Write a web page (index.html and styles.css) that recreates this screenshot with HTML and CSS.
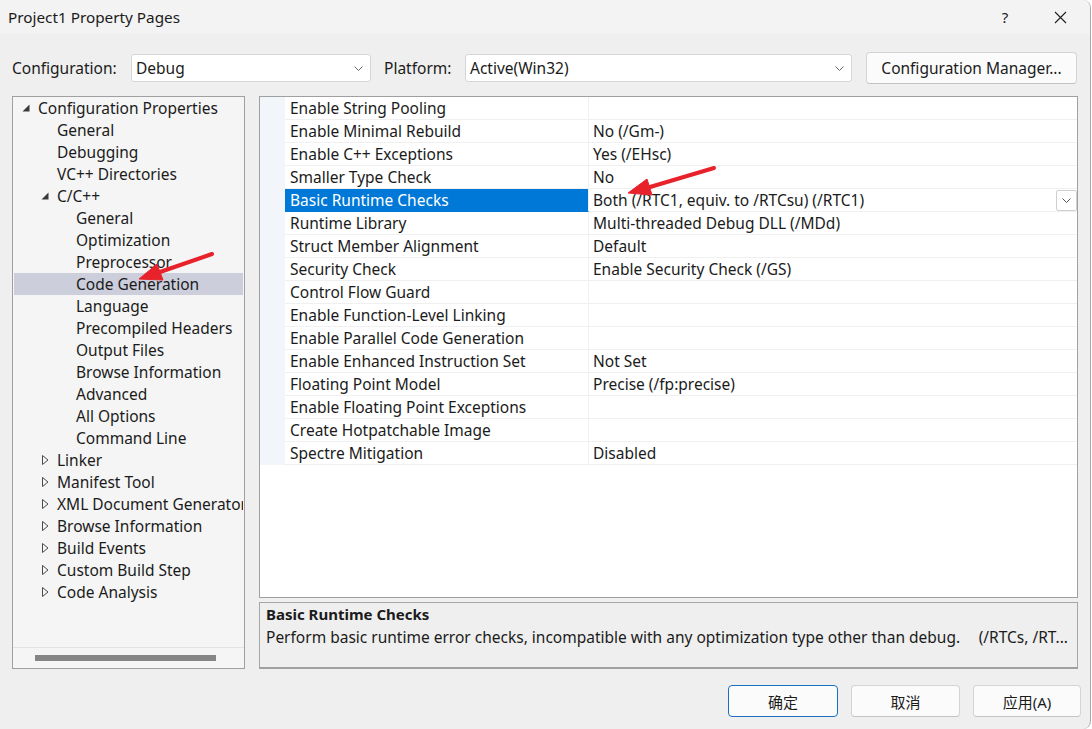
FILE: index.html
```html
<!DOCTYPE html>
<html>
<head>
<meta charset="utf-8">
<title>Project1 Property Pages</title>
<link rel="stylesheet" href="styles.css">
</head>
<body>
<div class="window">
  <div class="titlebar">
    <span class="title">Project1 Property Pages</span>
    <span class="help">?</span>
    <span class="close"><svg width="13" height="13" viewBox="0 0 13 13"><path d="M1 1L12 12M12 1L1 12" stroke="#1f1f1f" stroke-width="1.1" fill="none"/></svg></span>
  </div>

  <div class="toolbar">
    <span class="lbl lbl-config">Configuration:</span>
    <div class="combo combo-config"><span class="combo-text">Debug</span><svg class="chev" width="9" height="5" viewBox="0 0 9 5"><path d="M0.5 0.5L4.5 4.5L8.5 0.5" stroke="#666" fill="none"/></svg></div>
    <span class="lbl lbl-platform">Platform:</span>
    <div class="combo combo-platform"><span class="combo-text">Active(Win32)</span><svg class="chev" width="9" height="5" viewBox="0 0 9 5"><path d="M0.5 0.5L4.5 4.5L8.5 0.5" stroke="#666" fill="none"/></svg></div>
    <button class="btn cfg-btn">Configuration Manager...</button>
  </div>

  <div class="main">
    <div class="tree">
      <ul class="tree-list">
        <li class="node l0"><span class="tog"><svg width="8" height="8" viewBox="0 0 8 8"><path d="M7.5 0.5V7.5H0.5Z" fill="#3a3a3a"/></svg></span>Configuration Properties</li>
        <li class="node l1"><span class="tog"></span>General</li>
        <li class="node l1"><span class="tog"></span>Debugging</li>
        <li class="node l1"><span class="tog"></span>VC++ Directories</li>
        <li class="node l1"><span class="tog"><svg width="8" height="8" viewBox="0 0 8 8"><path d="M7.5 0.5V7.5H0.5Z" fill="#3a3a3a"/></svg></span>C/C++</li>
        <li class="node l2"><span class="tog"></span>General</li>
        <li class="node l2"><span class="tog"></span>Optimization</li>
        <li class="node l2"><span class="tog"></span>Preprocessor</li>
        <li class="node l2 selected"><span class="tog"></span>Code Generation</li>
        <li class="node l2"><span class="tog"></span>Language</li>
        <li class="node l2"><span class="tog"></span>Precompiled Headers</li>
        <li class="node l2"><span class="tog"></span>Output Files</li>
        <li class="node l2"><span class="tog"></span>Browse Information</li>
        <li class="node l2"><span class="tog"></span>Advanced</li>
        <li class="node l2"><span class="tog"></span>All Options</li>
        <li class="node l2"><span class="tog"></span>Command Line</li>
        <li class="node l1"><span class="tog"><svg class="col" width="7" height="10" viewBox="0 0 7 10"><path d="M0.5 0.5L6 5L0.5 9.5Z" fill="none" stroke="#4a4a4a"/></svg></span>Linker</li>
        <li class="node l1"><span class="tog"><svg class="col" width="7" height="10" viewBox="0 0 7 10"><path d="M0.5 0.5L6 5L0.5 9.5Z" fill="none" stroke="#4a4a4a"/></svg></span>Manifest Tool</li>
        <li class="node l1"><span class="tog"><svg class="col" width="7" height="10" viewBox="0 0 7 10"><path d="M0.5 0.5L6 5L0.5 9.5Z" fill="none" stroke="#4a4a4a"/></svg></span>XML Document Generator</li>
        <li class="node l1"><span class="tog"><svg class="col" width="7" height="10" viewBox="0 0 7 10"><path d="M0.5 0.5L6 5L0.5 9.5Z" fill="none" stroke="#4a4a4a"/></svg></span>Browse Information</li>
        <li class="node l1"><span class="tog"><svg class="col" width="7" height="10" viewBox="0 0 7 10"><path d="M0.5 0.5L6 5L0.5 9.5Z" fill="none" stroke="#4a4a4a"/></svg></span>Build Events</li>
        <li class="node l1"><span class="tog"><svg class="col" width="7" height="10" viewBox="0 0 7 10"><path d="M0.5 0.5L6 5L0.5 9.5Z" fill="none" stroke="#4a4a4a"/></svg></span>Custom Build Step</li>
        <li class="node l1"><span class="tog"><svg class="col" width="7" height="10" viewBox="0 0 7 10"><path d="M0.5 0.5L6 5L0.5 9.5Z" fill="none" stroke="#4a4a4a"/></svg></span>Code Analysis</li>
      </ul>
      <div class="hscroll"><div class="thumb"></div></div>
    </div>

    <div class="right">
      <div class="grid">
        <div class="row"><div class="gutter"></div><div class="name">Enable String Pooling</div><div class="value"></div></div>
        <div class="row"><div class="gutter"></div><div class="name">Enable Minimal Rebuild</div><div class="value">No (/Gm-)</div></div>
        <div class="row"><div class="gutter"></div><div class="name">Enable C++ Exceptions</div><div class="value">Yes (/EHsc)</div></div>
        <div class="row"><div class="gutter"></div><div class="name">Smaller Type Check</div><div class="value">No</div></div>
        <div class="row sel"><div class="gutter"></div><div class="name">Basic Runtime Checks</div><div class="value"><span class="val-text">Both (/RTC1, equiv. to /RTCsu) (/RTC1)</span><span class="dd"><svg width="9" height="5" viewBox="0 0 9 5"><path d="M0.5 0.5L4.5 4.5L8.5 0.5" stroke="#555" fill="none"/></svg></span></div></div>
        <div class="row"><div class="gutter"></div><div class="name">Runtime Library</div><div class="value">Multi-threaded Debug DLL (/MDd)</div></div>
        <div class="row"><div class="gutter"></div><div class="name">Struct Member Alignment</div><div class="value">Default</div></div>
        <div class="row"><div class="gutter"></div><div class="name">Security Check</div><div class="value">Enable Security Check (/GS)</div></div>
        <div class="row"><div class="gutter"></div><div class="name">Control Flow Guard</div><div class="value"></div></div>
        <div class="row"><div class="gutter"></div><div class="name">Enable Function-Level Linking</div><div class="value"></div></div>
        <div class="row"><div class="gutter"></div><div class="name">Enable Parallel Code Generation</div><div class="value"></div></div>
        <div class="row"><div class="gutter"></div><div class="name">Enable Enhanced Instruction Set</div><div class="value">Not Set</div></div>
        <div class="row"><div class="gutter"></div><div class="name">Floating Point Model</div><div class="value">Precise (/fp:precise)</div></div>
        <div class="row"><div class="gutter"></div><div class="name">Enable Floating Point Exceptions</div><div class="value"></div></div>
        <div class="row"><div class="gutter"></div><div class="name">Create Hotpatchable Image</div><div class="value"></div></div>
        <div class="row"><div class="gutter"></div><div class="name">Spectre Mitigation</div><div class="value">Disabled</div></div>
      </div>
      <div class="desc">
        <div class="desc-title">Basic Runtime Checks</div>
        <div class="desc-text"><span>Perform basic runtime error checks, incompatible with any optimization type other than debug.</span><span class="desc-switch">(/RTCs, /RT...</span></div>
      </div>
    </div>
  </div>

  <div class="footer">
    <button class="btn fbtn ok">确定</button>
    <button class="btn fbtn cancel">取消</button>
    <button class="btn fbtn apply">应用(A)</button>
  </div>

  <svg class="annot" width="1092" height="729" viewBox="0 0 1092 729">
    <g fill="#e8222b" stroke="#e8222b">
      <line x1="714" y1="168" x2="650" y2="187" stroke-width="4" stroke-linecap="round"/>
      <polygon points="628,193 652,195 647,179" stroke-width="1" stroke-linejoin="round"/>
      <line x1="212" y1="254" x2="160" y2="272" stroke-width="4" stroke-linecap="round"/>
      <polygon points="139,279 163,280 157,264" stroke-width="1" stroke-linejoin="round"/>
    </g>
  </svg>
</div>
</body>
</html>
```

FILE: styles.css
```css
* { box-sizing: border-box; margin: 0; padding: 0; }

html, body {
  width: 1092px;
  height: 729px;
  overflow: hidden;
  background: #ffffff;
}

body {
  font-family: "Noto Sans", "Noto Sans CJK SC", sans-serif;
  font-size: 15.5px;
  color: #1b1b1b;
}

.window {
  position: relative;
  width: 1091px;
  height: 729px;
  background: #efefef;
  border-right: 1px solid #a8a8a8;
  border-radius: 0 8px 8px 0;
  overflow: hidden;
  display: flex;
  flex-direction: column;
}

/* title bar */
.titlebar {
  height: 34px;
  flex: none;
  background: #f3f3f3;
  display: flex;
  align-items: center;
  padding-left: 8px;
  padding-right: 7px;
}
.title { flex: 1; font-size: 15.3px; }
.help {
  width: 20px;
  text-align: center;
  font-size: 15px;
  margin-right: 22px;
}
.close {
  width: 46px;
  height: 34px;
  display: flex;
  align-items: center;
  justify-content: center;
}

/* toolbar */
.toolbar {
  flex: none;
  height: 32px;
  margin-top: 18px;
  padding-left: 12px;
  display: flex;
  align-items: center;
}
.lbl { display: block; white-space: nowrap; }
.lbl-config { width: 119px; }
.lbl-platform { width: 81px; margin-left: 13px; }
.combo {
  height: 28px;
  background: #ffffff;
  border: 1px solid #d6d6d6;
  border-radius: 3px;
  display: flex;
  align-items: center;
  padding-left: 4px;
  padding-right: 7px;
}
.combo-config { width: 240px; }
.combo-platform { width: 387px; }
.combo-text { flex: 1; }
.btn {
  font-family: inherit;
  font-size: 15.5px;
  color: #1b1b1b;
  background: #fbfbfb;
  border: 1px solid #d4d4d4;
  border-bottom-color: #c2c2c2;
  border-radius: 4px;
}
.cfg-btn {
  width: 211px;
  height: 32px;
  margin-left: 14px;
}

/* main */
.main {
  flex: none;
  height: 573px;
  margin-top: 12px;
  padding-left: 12px;
  display: flex;
  gap: 14px;
}

.tree {
  width: 233px;
  height: 573px;
  border: 1px solid #a0a0a0;
  background: #f5f5f5;
  display: flex;
  flex-direction: column;
}
.tree-list {
  list-style: none;
  flex: 1;
  overflow: hidden;
  padding: 0 1px;
}
.node {
  height: 22px;
  display: flex;
  align-items: center;
  white-space: nowrap;
  overflow: hidden;
}
.node.l0 { padding-left: 5px; }
.node.l1 { padding-left: 24px; }
.node.l2 { padding-left: 43px; }
.node.selected { background: #cccedb; }
.tog {
  flex: none;
  width: 19px;
  display: flex;
  align-items: center;
  padding-left: 3px;
}
.tog .col { margin-left: 1px; }
.hscroll {
  flex: none;
  height: 21px;
  border-top: 1px solid #e2e2e2;
  padding-top: 7px;
}
.thumb {
  width: 181px;
  height: 6px;
  margin-left: 22px;
  background: #858585;
}

.right {
  width: 819px;
  display: flex;
  flex-direction: column;
  gap: 4px;
}
.grid {
  height: 502px;
  border: 1px solid #a0a0a0;
  background: #ffffff;
}
.row {
  height: 23px;
  display: flex;
}
.gutter {
  width: 25px;
  flex: none;
  background: #f2f5fa;
}
.name {
  width: 304px;
  flex: none;
  padding-left: 5px;
  border-right: 1px solid #f0f0f0;
  border-bottom: 1px solid #f0f0f0;
  display: flex;
  align-items: center;
  white-space: nowrap;
}
.value {
  flex: 1;
  padding-left: 4px;
  border-bottom: 1px solid #f0f0f0;
  display: flex;
  align-items: center;
  white-space: nowrap;
}
.row.sel .name {
  background: #0078d7;
  color: #ffffff;
  border-bottom-color: #0078d7;
}
.val-text { flex: 1; }
.dd {
  width: 21px;
  height: 21px;
  border: 1px solid #cfcfcf;
  border-radius: 2px;
  display: flex;
  align-items: center;
  justify-content: center;
  background: #fff;
}

.desc {
  height: 67px;
  border: 1px solid #a6a6a6;
  border-bottom: 2px solid #a0a0a0;
  background: #efefef;
  padding: 0 9px 0 6px;
}
.desc-title {
  font-weight: bold;
  font-size: 15px;
  height: 22px;
  line-height: 22px;
}
.desc-text {
  height: 24px;
  line-height: 24px;
  display: flex;
  justify-content: space-between;
  white-space: nowrap;
}

/* footer */
.footer {
  flex: none;
  margin-top: 16px;
  padding-right: 9px;
  display: flex;
  justify-content: flex-end;
  gap: 13px;
}
.fbtn {
  height: 32px;
  font-family: "Noto Sans", "Noto Sans CJK SC", sans-serif;
  font-size: 15px;
}
.ok { width: 110px; border: 1px solid #1a6fc4; }
.cancel { width: 109px; }
.apply { width: 108px; }

.annot {
  position: absolute;
  left: 0;
  top: 0;
  pointer-events: none;
}
```
